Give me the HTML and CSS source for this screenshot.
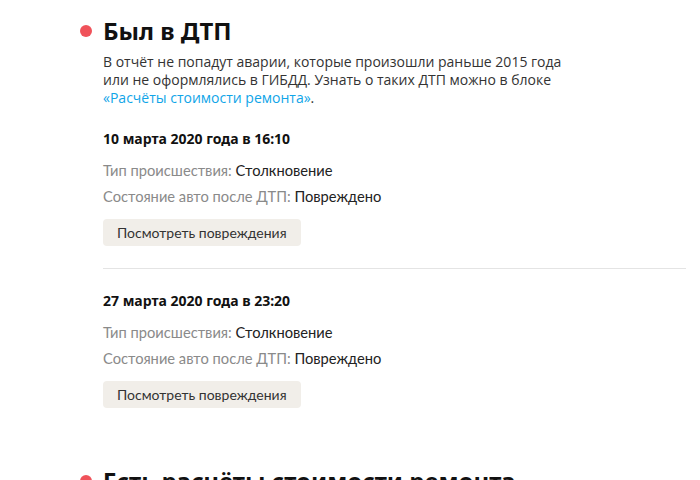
FILE: index.html
```html
<!DOCTYPE html>
<html lang="ru">
<head>
    <meta charset="UTF-8">
    <meta name="viewport" content="width=device-width, initial-scale=1.0">
    <title>Был в ДТП</title>
    <link rel="stylesheet" href="styles.css">
</head>
<body>
    <div class="report">
        <section class="block">
            <h2 class="block-title"><span class="dot"></span>Был в ДТП</h2>
            <div class="block-body">
                <p class="note">
                    В отчёт не попадут аварии, которые произошли раньше 2015 года<br>
                    или не оформлялись в ГИБДД. Узнать о таких ДТП можно в блоке<br>
                    <a href="#repair">«Расчёты стоимости ремонта»</a>.
                </p>

                <div class="accident">
                    <div class="accident-date">10 марта 2020 года в 16:10</div>
                    <div class="row"><span class="label">Тип происшествия:</span> Столкновение</div>
                    <div class="row"><span class="label">Состояние авто после ДТП:</span> Повреждено</div>
                    <button class="btn">Посмотреть повреждения</button>
                </div>

                <div class="accident">
                    <div class="accident-date">27 марта 2020 года в 23:20</div>
                    <div class="row"><span class="label">Тип происшествия:</span> Столкновение</div>
                    <div class="row"><span class="label">Состояние авто после ДТП:</span> Повреждено</div>
                    <button class="btn">Посмотреть повреждения</button>
                </div>
            </div>
        </section>

        <section class="block" id="repair">
            <h2 class="block-title"><span class="dot"></span>Есть расчёты стоимости ремонта</h2>
        </section>
    </div>
</body>
</html>
```

FILE: styles.css
```css
body {
    margin: 0;
    padding: 0;
    background: #fff;
    color: #222;
    font-family: "Open Sans", sans-serif;
}
.report {
    padding: 14px 14px 0 80px;
}
.block {
    margin-bottom: 56px;
}
.block-title {
    display: flex;
    align-items: center;
    margin: 0;
    font-family: "Noto Sans", sans-serif;
    font-size: 24px;
    font-weight: 700;
    line-height: 34px;
    color: #111;
    white-space: nowrap;
}
.dot {
    width: 12px;
    height: 12px;
    border-radius: 50%;
    background: #f0525a;
    margin-right: 11px;
    flex-shrink: 0;
}
.block-body {
    padding-left: 23px;
}
.note {
    margin: 5px 0 22px;
    font-size: 14px;
    line-height: 18px;
    color: #333;
}
.note a {
    color: #10a5e8;
    text-decoration: none;
}
.accident {
    padding: 22px 0 22px;
    border-bottom: 1px solid #e4e4e4;
}
.accident:first-of-type {
    padding-top: 0;
}
.accident:last-child {
    border-bottom: none;
    padding-bottom: 0;
}
.accident-date {
    font-family: "Noto Sans", sans-serif;
    font-weight: 700;
    font-size: 14px;
    line-height: 20px;
    color: #111;
    margin-bottom: 8px;
}
.row {
    font-family: Lato, sans-serif;
    font-size: 14.7px;
    line-height: 26px;
    color: #222;
}
.label {
    color: #8a8a8a;
}
.btn {
    margin-top: 10px;
    border: none;
    border-radius: 4px;
    background: #f1eee9;
    color: #333;
    font-family: Lato, sans-serif;
    font-size: 14px;
    line-height: 17px;
    padding: 5px 14px;
    cursor: pointer;
}
```
